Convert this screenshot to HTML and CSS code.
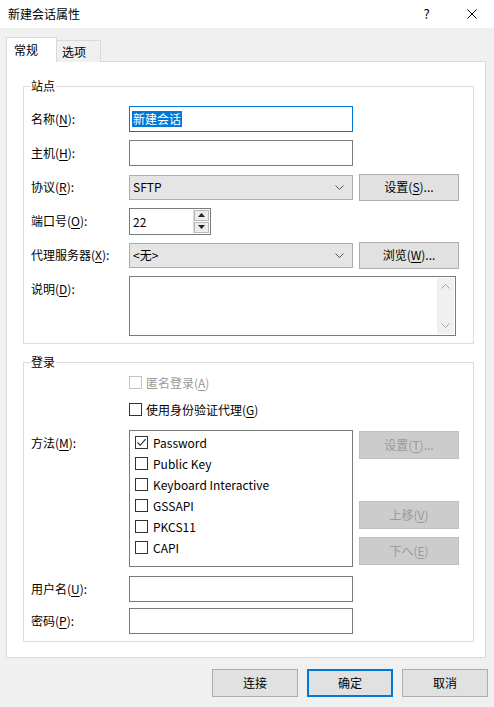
FILE: index.html
```html
<!DOCTYPE html>
<html lang="zh-CN">
<head>
  <meta charset="UTF-8">
  <meta name="viewport" content="width=device-width, initial-scale=1.0">
  <title>新建会话属性</title>
  <link rel="stylesheet" href="styles.css">
</head>
<body>
  <div class="titlebar">
    <span class="title">新建会话属性</span>
    <span class="caption-btn">?</span>
    <span class="caption-btn">
      <svg width="10" height="10" viewBox="0 0 10 10"><path d="M0.5 0.5L9.5 9.5M9.5 0.5L0.5 9.5" stroke="#000" stroke-width="1" fill="none"/></svg>
    </span>
  </div>

  <div class="tabs">
    <div class="tab active">常规</div>
    <div class="tab">选项</div>
  </div>

  <div class="panel">
    <fieldset class="group site">
      <legend>站点</legend>

      <div class="row">
        <span class="lbl">名称(<u>N</u>):</span>
        <div class="edit focused"><span class="sel">新建会话</span></div>
      </div>

      <div class="row">
        <span class="lbl">主机(<u>H</u>):</span>
        <div class="edit"></div>
      </div>

      <div class="row">
        <span class="lbl">协议(<u>R</u>):</span>
        <div class="combo">
          <span>SFTP</span>
          <svg class="chev" width="9" height="5" viewBox="0 0 9 5"><path d="M0.5 0.5L4.5 4.5L8.5 0.5" stroke="#555" fill="none"/></svg>
        </div>
        <button class="btn side">设置(<u>S</u>)...</button>
      </div>

      <div class="row">
        <span class="lbl">端口号(<u>O</u>):</span>
        <div class="spin">
          <span class="spin-text">22</span>
          <div class="spin-btns">
            <span class="spin-btn"><svg width="7" height="4" viewBox="0 0 7 4"><path d="M0 4L3.5 0L7 4Z" fill="#222"/></svg></span>
            <span class="spin-btn"><svg width="7" height="4" viewBox="0 0 7 4"><path d="M0 0L3.5 4L7 0Z" fill="#222"/></svg></span>
          </div>
        </div>
      </div>

      <div class="row">
        <span class="lbl">代理服务器(<u>X</u>):</span>
        <div class="combo">
          <span>&lt;无&gt;</span>
          <svg class="chev" width="9" height="5" viewBox="0 0 9 5"><path d="M0.5 0.5L4.5 4.5L8.5 0.5" stroke="#555" fill="none"/></svg>
        </div>
        <button class="btn side">浏览(<u>W</u>)...</button>
      </div>

      <div class="row top">
        <span class="lbl">说明(<u>D</u>):</span>
        <div class="memo">
          <div class="vscroll">
            <svg width="9" height="5" viewBox="0 0 9 5"><path d="M0.5 4.5L4.5 0.5L8.5 4.5" stroke="#a6a6a6" fill="none"/></svg>
            <svg width="9" height="5" viewBox="0 0 9 5"><path d="M0.5 0.5L4.5 4.5L8.5 0.5" stroke="#a6a6a6" fill="none"/></svg>
          </div>
        </div>
      </div>
    </fieldset>

    <fieldset class="group login">
      <legend>登录</legend>

      <div class="check-row anon">
        <span class="box disabled"></span>
        <span class="muted">匿名登录(<u>A</u>)</span>
      </div>

      <div class="check-row agent">
        <span class="box"></span>
        <span>使用身份验证代理(<u>G</u>)</span>
      </div>

      <div class="row top method">
        <span class="lbl">方法(<u>M</u>):</span>
        <div class="list">
          <div class="item">
            <span class="box"><svg width="11" height="11" viewBox="0 0 11 11"><path d="M1.5 5.5L4.2 8.3L9.6 2.2" stroke="#222" stroke-width="1.1" fill="none"/></svg></span>
            <span>Password</span>
          </div>
          <div class="item"><span class="box"></span><span>Public Key</span></div>
          <div class="item"><span class="box"></span><span>Keyboard Interactive</span></div>
          <div class="item"><span class="box"></span><span>GSSAPI</span></div>
          <div class="item"><span class="box"></span><span>PKCS11</span></div>
          <div class="item"><span class="box"></span><span>CAPI</span></div>
        </div>
        <div class="list-btns">
          <button class="btn side" disabled>设置(<u>T</u>)...</button>
          <button class="btn side up" disabled>上移(<u>V</u>)</button>
          <button class="btn side" disabled>下へ(<u>E</u>)</button>
        </div>
      </div>

      <div class="row user">
        <span class="lbl">用户名(<u>U</u>):</span>
        <div class="edit"></div>
      </div>

      <div class="row">
        <span class="lbl">密码(<u>P</u>):</span>
        <div class="edit"></div>
      </div>
    </fieldset>
  </div>

  <div class="footer">
    <button class="btn">连接</button>
    <button class="btn default">确定</button>
    <button class="btn">取消</button>
  </div>
</body>
</html>
```

FILE: styles.css
```css
* {
  box-sizing: border-box;
}

body {
  margin: 0;
  width: 494px;
  height: 707px;
  background-color: #f0f0f0;
  font-family: "Noto Sans CJK SC", "Noto Sans", sans-serif;
  font-size: 12px;
  line-height: 16px;
  color: #000;
  overflow: hidden;
}

u {
  text-decoration: underline;
  text-underline-offset: 2px;
}

/* window caption */
.titlebar {
  height: 28px;
  background-color: #fff;
  display: flex;
  align-items: center;
}

.title {
  flex: 1;
  padding-left: 8px;
}

.caption-btn {
  width: 45px;
  height: 28px;
  display: flex;
  align-items: center;
  justify-content: center;
  font-size: 13px;
}

/* tab strip */
.tabs {
  display: flex;
  align-items: flex-end;
  margin: 9px 0 -1px 6px;
  height: 25px;
  position: relative;
  z-index: 1;
}

.tab {
  height: 22px;
  width: 44px;
  padding-left: 5px;
  line-height: 21px;
  border: 1px solid #d9d9d9;
  border-left: none;
  border-bottom: none;
  background-color: #f0f0f0;
}

.tab.active {
  width: 51px;
  height: 25px;
  padding-left: 7px;
  line-height: 23px;
  border-left: 1px solid #d9d9d9;
  border-right: 1px solid #d9d9d9;
  background-color: #fff;
}

.panel {
  margin: 0 8px 0 6px;
  height: 597px;
  background-color: #fff;
  border: 1px solid #d9d9d9;
  padding: 16px 11px 0 16px;
}

/* group boxes */
.group {
  margin: 0;
  border: 1px solid #dcdcdc;
  padding: 0 7px 7px 7px;
  min-width: 0;
}

.group legend {
  padding: 0 1px;
  margin-left: -1px;
  line-height: 16px;
}

.group.login {
  margin-top: 10px;
}

.site .row:first-of-type {
  margin-top: 12px;
}

.row {
  display: flex;
  align-items: center;
  height: 26px;
  margin-top: 8px;
}

.row.top {
  align-items: flex-start;
  height: auto;
}

.lbl {
  width: 98px;
  flex-shrink: 0;
}

.row.top .lbl {
  padding-top: 5px;
}

.method .lbl {
  padding-top: 4px;
}

.edit {
  width: 224px;
  height: 26px;
  border: 1px solid #7a7a7a;
  background-color: #fff;
  padding: 0 2px;
  display: flex;
  align-items: center;
}

.edit.focused {
  border-color: #0078d7;
}

.sel {
  background-color: #0078d7;
  color: #fff;
  padding: 0 1px;
}

.combo {
  width: 224px;
  height: 25px;
  border: 1px solid #adadad;
  background-color: #e5e5e5;
  padding: 0 8px 0 3px;
  display: flex;
  align-items: center;
  justify-content: space-between;
}

.btn {
  font-family: inherit;
  font-size: 12px;
  line-height: 16px;
  color: #000;
  width: 86px;
  height: 28px;
  padding: 0;
  border: 1px solid #adadad;
  background-color: #e1e1e1;
}

.btn.side {
  width: 100px;
  height: 27px;
  margin-left: 6px;
}

.btn:disabled {
  background-color: #cccccc;
  border-color: #bfbfbf;
  color: #9a9a9a;
}

.btn.default {
  border: 2px solid #0078d7;
}

/* port number with up/down arrows */
.spin {
  width: 82px;
  height: 27px;
  border: 1px solid #7a7a7a;
  display: flex;
}

.spin-text {
  flex: 1;
  padding-left: 3px;
  line-height: 25px;
}

.spin-btns {
  width: 17px;
  display: flex;
  flex-direction: column;
  gap: 1px;
  padding: 1px 1px 1px 0;
  border-left: 1px solid #dcdcdc;
}

.spin-btn {
  flex: 1;
  border: 1px solid #b9b9b9;
  background-color: #ececec;
  display: flex;
  align-items: center;
  justify-content: center;
}

.memo {
  width: 327px;
  height: 60px;
  border: 1px solid #7a7a7a;
  display: flex;
  justify-content: flex-end;
  padding: 1px;
}

.vscroll {
  width: 17px;
  background-color: #f0f0f0;
  display: flex;
  flex-direction: column;
  justify-content: space-between;
  align-items: center;
  padding: 6px 0;
}

/* checkboxes */
.box {
  width: 13px;
  height: 13px;
  border: 1px solid #333;
  background-color: #fff;
  flex-shrink: 0;
  display: flex;
  align-items: center;
  justify-content: center;
}

.box.disabled {
  border-color: #c4c4c4;
}

.check-row {
  display: flex;
  align-items: center;
  gap: 4px;
  height: 13px;
  margin-left: 98px;
}

.check-row.anon {
  margin-top: 6px;
}

.check-row.agent {
  margin-top: 14px;
}

.muted {
  color: #9a9a9a;
}

.method {
  margin-top: 14px;
}

.list {
  width: 224px;
  height: 137px;
  border: 1px solid #7a7a7a;
  padding: 1px 0 0 5px;
}

.item {
  height: 21px;
  display: flex;
  align-items: center;
  gap: 5px;
}

.list-btns {
  display: flex;
  flex-direction: column;
  gap: 8px;
  padding-top: 1px;
}

.list-btns .btn.side {
  height: 28px;
}

.list-btns .up {
  margin-top: 34px;
}

.row.user {
  margin-top: 9px;
}

.login .row:last-child {
  margin-top: 6px;
}

/* bottom buttons */
.footer {
  display: flex;
  justify-content: flex-end;
  gap: 9px;
  margin: 11px 6px 0 0;
}
```
